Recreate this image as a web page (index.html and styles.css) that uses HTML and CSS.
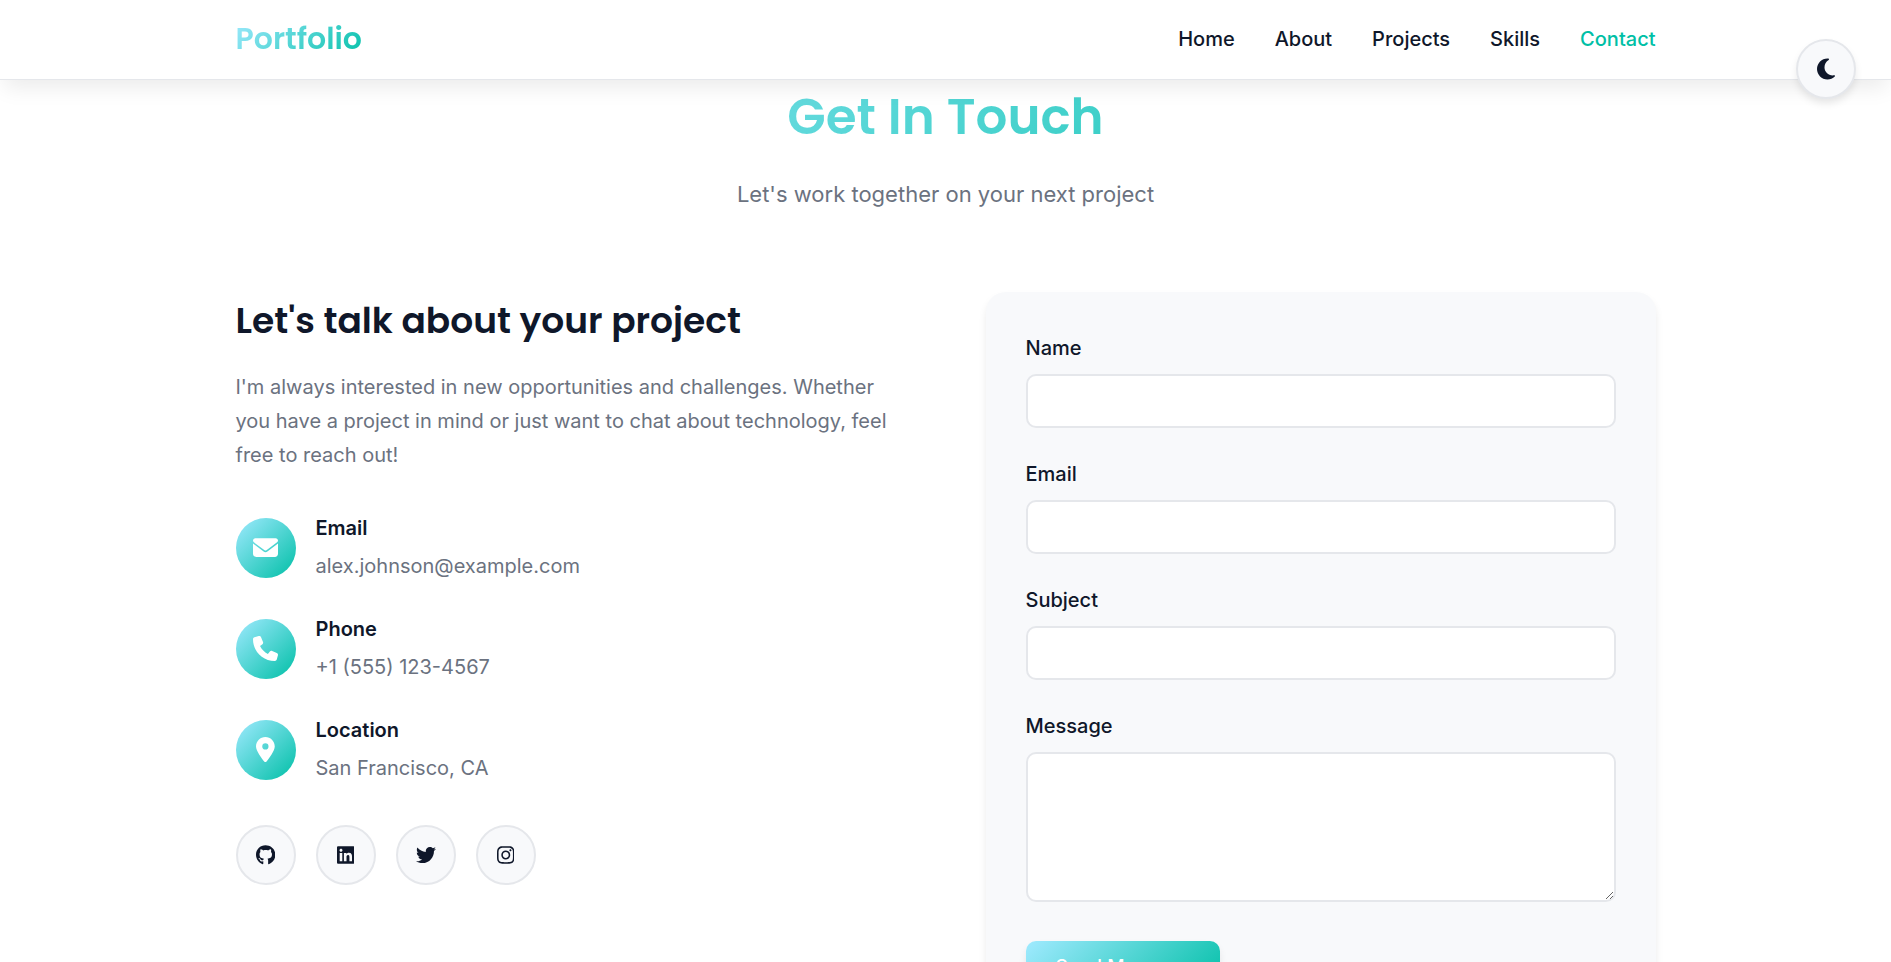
FILE: index.html
```html
<!DOCTYPE html>
<html lang="en">
<head>
<meta charset="utf-8">
<meta name="viewport" content="width=device-width, initial-scale=1">
<title>Portfolio - Contact</title>
<link rel="stylesheet" href="styles.css">
</head>
<body>
<header class="navbar">
  <nav class="container nav-inner">
    <a class="logo" href="#home">Portfolio</a>
    <ul class="nav-links">
      <li><a href="#home">Home</a></li>
      <li><a href="#about">About</a></li>
      <li><a href="#projects">Projects</a></li>
      <li><a href="#skills">Skills</a></li>
      <li><a class="active" href="#contact">Contact</a></li>
    </ul>
  </nav>
</header>
<button class="theme-toggle" type="button" aria-label="Toggle dark mode">
  <svg viewBox="0 0 384 512" aria-hidden="true"><path d="M223.5 32C100 32 0 132.300 0 256S100 480 223.500 480c60.600 0 115.500-24.200 155.800-63.400c5-4.900 6.300-12.500 3.100-18.700s-10.100-9.700-17-8.500c-9.800 1.700-19.800 2.600-30.100 2.600c-96.900 0-175.500-78.800-175.500-176c0-65.800 36-123.100 89.300-153.300c6.100-3.500 9.200-10.500 7.700-17.300s-7.300-11.900-14.300-12.500c-6.300-.5-12.600-.8-19-.8z"/></svg>
</button>
<main class="contact container" id="contact">
  <div class="section-header">
    <h2>Get In Touch</h2>
    <p>Let's work together on your next project</p>
  </div>
  <div class="contact-content">
    <section class="contact-info">
      <h3>Let's talk about your project</h3>
      <p class="intro">I'm always interested in new opportunities and challenges. Whether you have a project in mind or just want to chat about technology, feel free to reach out!</p>
      <ul class="details">
        <li>
          <span class="badge"><svg viewBox="0 0 512 512" aria-hidden="true"><path d="M48 64C21.500 64 0 85.500 0 112c0 15.100 7.100 29.300 19.200 38.400L236.800 313.600c11.400 8.500 27 8.500 38.400 0L492.800 150.400c12.100-9.100 19.200-23.300 19.200-38.400c0-26.500-21.500-48-48-48H48zM0 176V384c0 35.300 28.700 64 64 64H448c35.300 0 64-28.700 64-64V176L294.400 339.200c-22.800 17.100-54 17.100-76.800 0L0 176z"/></svg></span>
          <div><h4>Email</h4><p>alex.johnson@example.com</p></div>
        </li>
        <li>
          <span class="badge"><svg viewBox="0 0 512 512" aria-hidden="true"><path d="M164.900 24.600c-7.700-18.600-28-28.500-47.400-23.200l-88 24C12.100 30.200 0 46 0 64C0 311.400 200.600 512 448 512c18 0 33.800-12.100 38.600-29.500l24-88c5.300-19.400-4.600-39.700-23.200-47.400l-96-40c-16.300-6.800-35.200-2.100-46.300 11.600L304.700 368C234.300 334.700 177.300 277.700 144 207.300L193.300 167c13.700-11.200 18.400-30 11.600-46.300l-40-96z"/></svg></span>
          <div><h4>Phone</h4><p>+1 (555) 123-4567</p></div>
        </li>
        <li>
          <span class="badge"><svg viewBox="0 0 384 512" aria-hidden="true"><path d="M215.700 499.200C267 435 384 279.400 384 192C384 86 298 0 192 0S0 86 0 192c0 87.400 117 243 168.300 307.200c12.300 15.300 35.100 15.300 47.400 0zM192 128a64 64 0 1 1 0 128 64 64 0 1 1 0-128z"/></svg></span>
          <div><h4>Location</h4><p>San Francisco, CA</p></div>
        </li>
      </ul>
      <div class="social">
        <a href="#github" aria-label="GitHub"><svg viewBox="0 0 496 512" aria-hidden="true"><path d="M165.900 397.400c0 2-2.300 3.600-5.200 3.600-3.300.3-5.600-1.300-5.600-3.600 0-2 2.300-3.600 5.200-3.600 3-.3 5.600 1.300 5.600 3.600zM244.800 8C106.100 8 0 113.300 0 252c0 110.900 69.800 205.800 169.500 239.200 12.800 2.300 17.300-5.600 17.300-12.100 0-6.200-.3-40.400-.3-61.400 0 0-70 15-84.700-29.800 0 0-11.400-29.100-27.800-36.600 0 0-22.900-15.700 1.600-15.400 0 0 24.900 2 38.600 25.800 21.900 38.600 58.600 27.500 72.900 20.900 2.300-16 8.800-27.100 16-33.700-55.900-6.200-112.300-14.300-112.300-110.500 0-27.500 7.600-41.300 23.600-58.900-2.600-6.500-11.100-33.300 2.600-67.900 20.900-6.500 69 27 69 27 20-5.600 41.500-8.500 62.800-8.500s42.800 2.900 62.800 8.500c0 0 48.100-33.600 69-27 13.700 34.700 5.200 61.400 2.600 67.900 16 17.700 25.800 31.500 25.800 58.900 0 96.500-58.900 104.200-114.800 110.500 9.200 7.900 17 22.900 17 46.400 0 33.700-.3 75.400-.3 83.600 0 6.500 4.600 14.400 17.300 12.100C428.200 457.800 496 362.900 496 252 496 113.300 383.500 8 244.800 8z"/></svg></a>
        <a href="#linkedin" aria-label="LinkedIn"><svg viewBox="0 0 448 512" aria-hidden="true"><path d="M416 32H31.900C14.300 32 0 46.500 0 64.300v383.400C0 465.500 14.300 480 31.900 480H416c17.600 0 32-14.500 32-32.300V64.300c0-17.800-14.400-32.300-32-32.300zM135.400 416H69V202.200h66.500V416zm-33.200-243c-21.300 0-38.500-17.300-38.500-38.500S80.900 96 102.200 96c21.200 0 38.500 17.300 38.500 38.500 0 21.300-17.200 38.500-38.500 38.500zm282.100 243h-66.400V312c0-24.800-.5-56.700-34.500-56.700-34.600 0-39.900 27-39.900 54.900V416h-66.400V202.200h63.700v29.200h.9c8.900-16.800 30.600-34.500 62.900-34.500 67.200 0 79.700 44.300 79.700 101.900V416z"/></svg></a>
        <a href="#twitter" aria-label="Twitter"><svg viewBox="0 0 512 512" aria-hidden="true"><path d="M459.400 151.700c.3 4.500.3 9.100.3 13.600 0 138.700-105.600 298.600-298.600 298.600-59.500 0-114.700-17.200-161.100-47.100 8.400 1 16.600 1.300 25.300 1.300 49.100 0 94.200-16.600 130.300-44.800-46.100-1-84.800-31.200-98.100-72.800 6.500 1 13 1.600 19.800 1.600 9.400 0 18.800-1.300 27.600-3.600-48.100-9.700-84.100-52-84.100-103v-1.300c14 7.800 30.200 12.700 47.400 13.300-28.300-18.800-46.800-51-46.800-87.400 0-19.500 5.200-37.400 14.300-53 51.700 63.700 129.300 105.300 216.400 109.800-1.600-7.800-2.600-15.900-2.600-24 0-57.800 46.800-104.900 104.900-104.900 30.200 0 57.500 12.700 76.700 33.100 23.700-4.500 46.500-13.300 66.600-25.300-7.800 24.400-24.400 44.800-46.100 57.800 21.100-2.300 41.600-8.100 60.400-16.200-14.300 20.800-32.200 39.300-52.600 54.300z"/></svg></a>
        <a href="#instagram" aria-label="Instagram"><svg viewBox="0 0 448 512" aria-hidden="true"><path d="M224.100 141c-63.600 0-114.900 51.300-114.900 114.900s51.300 114.900 114.900 114.900S339 319.500 339 255.900 287.700 141 224.100 141zm0 189.600c-41.100 0-74.700-33.500-74.700-74.700s33.500-74.700 74.700-74.700 74.700 33.500 74.700 74.700-33.600 74.700-74.700 74.700zm146.400-194.300c0 14.900-12 26.800-26.800 26.800-14.900 0-26.800-12-26.800-26.800s12-26.800 26.800-26.800 26.800 12 26.800 26.800zm76.100 27.200c-1.700-35.900-9.900-67.700-36.200-93.900-26.200-26.200-58-34.400-93.900-36.200-37-2.100-147.900-2.100-184.900 0-35.800 1.700-67.600 9.900-93.900 36.100s-34.400 58-36.200 93.900c-2.100 37-2.100 147.900 0 184.900 1.700 35.900 9.900 67.700 36.200 93.900s58 34.400 93.900 36.200c37 2.100 147.900 2.100 184.900 0 35.900-1.700 67.700-9.900 93.900-36.200 26.200-26.200 34.400-58 36.200-93.900 2.100-37 2.100-147.800 0-184.800zM398.800 388c-7.800 19.600-22.900 34.700-42.600 42.600-29.500 11.700-99.500 9-132.100 9s-102.700 2.600-132.100-9c-19.600-7.800-34.700-22.900-42.600-42.600-11.700-29.500-9-99.500-9-132.100s-2.600-102.700 9-132.100c7.800-19.600 22.900-34.700 42.600-42.600 29.500-11.700 99.500-9 132.100-9s102.700-2.600 132.100 9c19.600 7.800 34.700 22.900 42.600 42.600 11.700 29.500 9 99.500 9 132.100s2.700 102.700-9 132.100z"/></svg></a>
      </div>
    </section>
    <form class="contact-form">
      <div class="form-group"><label for="name">Name</label><input id="name" name="name" type="text"></div>
      <div class="form-group"><label for="email">Email</label><input id="email" name="email" type="email"></div>
      <div class="form-group"><label for="subject">Subject</label><input id="subject" name="subject" type="text"></div>
      <div class="form-group"><label for="message">Message</label><textarea id="message" name="message" rows="5"></textarea></div>
      <button class="submit" type="submit">Send Message</button>
    </form>
  </div>
</main>
</body>
</html>
```
FILE: styles.css
```css
:root {
  --text: #0f172a;
  --muted: #6b7280;
  --border: #e5e7eb;
  --surface: #f8f9fb;
  --accent: #00bfa6;
  --gradient: linear-gradient(135deg, #a0eaff 0%, #00bfa6 100%);
  --heading: Poppins, Inter, "Open Sans", sans-serif;
}

* { box-sizing: border-box; margin: 0; padding: 0; }

body {
  height: 100vh;
  overflow: hidden;
  font: 400 20px/32px Inter, "Open Sans", sans-serif;
  color: var(--text);
  background: #fff;
}

a { color: inherit; text-decoration: none; }
ul { list-style: none; }
svg { display: block; fill: currentColor; }

.container { width: 100%; max-width: 1500px; margin: 0 auto; padding: 0 40px; }

.navbar {
  position: relative;
  z-index: 1;
  background: #fff;
  border-bottom: 1px solid var(--border);
  box-shadow: 0 12px 20px -4px rgba(0, 0, 0, .08);
}

.nav-inner {
  display: flex;
  align-items: center;
  justify-content: space-between;
  padding-top: 15px;
  padding-bottom: 16px;
}

.logo, .section-header h2 {
  font-family: var(--heading);
  background: var(--gradient);
  -webkit-background-clip: text;
  background-clip: text;
  color: transparent;
}

.logo { font-size: 30px; font-weight: 600; line-height: 48px; }
.nav-links { display: flex; gap: 40px; font-weight: 500; }
.active { color: var(--accent); }

.theme-toggle {
  position: fixed;
  z-index: 2;
  top: 39px;
  right: 35px;
  display: grid;
  place-items: center;
  width: 60px;
  height: 60px;
  border: 2px solid var(--border);
  border-radius: 50%;
  background: var(--surface);
  color: var(--text);
  box-shadow: 0 5px 8px -1px rgba(0, 0, 0, .1);
}
.theme-toggle svg { height: 24px; }

.section-header { padding: 77px 0 80px; margin-top: -80px; text-align: center; }
.section-header h2 { font-size: 50px; font-weight: 600; line-height: 80px; margin-bottom: 20px; }
.section-header p { font-size: 22px; line-height: 35px; color: var(--muted); }

.contact-content { display: grid; grid-template-columns: 1fr 1fr; gap: 80px; }

.contact-info h3 { margin-bottom: 20px; font: 600 36px/58px var(--heading); }
.intro { margin-bottom: 40px; line-height: 34px; color: var(--muted); }
.details { display: grid; gap: 30px; margin-bottom: 40px; }
.details li { display: flex; align-items: center; gap: 20px; }
.details h4 { margin-bottom: 5px; font-size: 20px; font-weight: 600; }
.details p { line-height: 34px; color: var(--muted); }

.badge {
  display: grid;
  place-items: center;
  width: 60px;
  height: 60px;
  border-radius: 50%;
  background: var(--gradient);
  color: #fff;
}
.badge svg { height: 25px; }

.social { display: flex; gap: 20px; }
.social a {
  display: grid;
  place-items: center;
  width: 60px;
  height: 60px;
  border: 2px solid var(--border);
  border-radius: 50%;
  background: var(--surface);
}
.social svg { height: 20px; }

.contact-form {
  padding: 40px;
  border-radius: 20px;
  background: var(--surface);
  box-shadow: 0 5px 8px -1px rgba(0, 0, 0, .1);
}
.form-group { margin-bottom: 30px; }
.form-group label { display: block; margin-bottom: 10px; font-weight: 500; }
.form-group input, .form-group textarea {
  width: 100%;
  padding: 12px 16px;
  border: 2px solid var(--border);
  border-radius: 10px;
  background: #fff;
  color: var(--text);
  font: inherit;
}
.form-group input { display: block; height: 54px; }
.form-group textarea { height: 150px; resize: vertical; }

.submit {
  padding: 15px 30px;
  border: 0;
  border-radius: 10px;
  background: var(--gradient);
  color: #fff;
  font: 500 19px/22px Inter, "Open Sans", sans-serif;
  box-shadow: 0 5px 8px -1px rgba(0, 0, 0, .1);
}
```
